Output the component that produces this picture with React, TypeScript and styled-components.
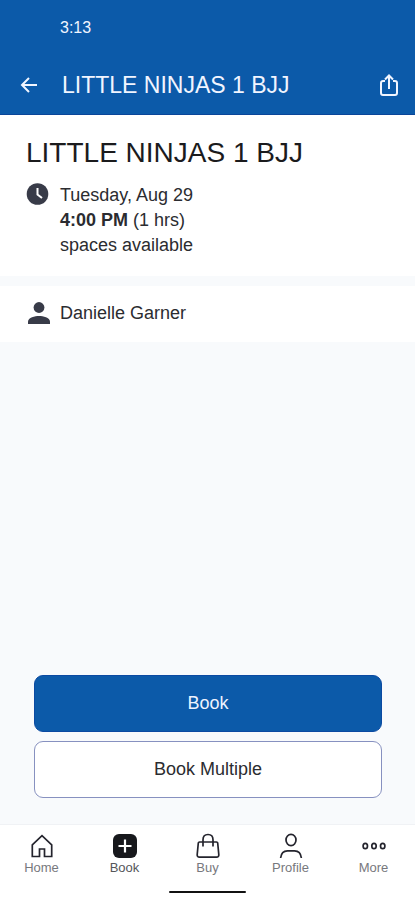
import React from "react";
import styled, { createGlobalStyle } from "styled-components";

const GlobalStyle = createGlobalStyle`
  * { box-sizing: border-box; }
  body {
    margin: 0;
    background: #f8fafc;
    font-family: "Liberation Sans", Arial, sans-serif;
    color: #2b2c30;
  }
  h1, h2, p { margin: 0; font-weight: 400; }
  svg { display: block; flex: none; }
`;

const Screen = styled.div`
  display: flex;
  flex-direction: column;
  min-height: 100vh;
`;

const Header = styled.header`
  background: #0c5aa9;
  border-bottom: 1px solid #0a4599;
  color: #f1f5ff;
`;

const StatusBar = styled.div`
  padding: 18px 60px 0;
  font-size: 16px;
  line-height: 20px;
`;

const AppBar = styled.div`
  display: flex;
  align-items: center;
  margin-top: 18px;
  height: 58px;
  padding: 0 12px 0 16px;
`;

const AppTitle = styled.h1`
  flex: 1;
  margin-left: 20px;
  font-size: 23px;
  line-height: 28px;
`;

const IconButton = styled.button`
  display: flex;
  padding: 0;
  border: 0;
  background: none;
  color: inherit;
`;

const Card = styled.section<{ $compact?: boolean }>`
  background: #fff;
  padding: ${(p) => (p.$compact ? "15px 26px 16px" : "20px 26px 18px")};
  & + & { margin-top: 10px; }
`;

const ClassTitle = styled.h2`
  color: #1b1b1d;
  font-size: 28px;
  line-height: 36px;
  margin-bottom: 12px;
`;

const InfoRow = styled.div`
  display: flex;
  align-items: flex-start;
  gap: 10px;
`;

const InfoIcon = styled.svg`
  width: 24px;
  height: 24px;
  fill: #383b48;
`;

const InfoText = styled.div`
  font-size: 18px;
  line-height: 25px;
`;

const Actions = styled.div`
  display: flex;
  flex-direction: column;
  gap: 9px;
  margin-top: auto;
  padding: 20px 33px 26px 34px;
`;

const ActionButton = styled.button<{ $primary?: boolean }>`
  height: 57px;
  border: 1px solid ${(p) => (p.$primary ? "#0b4aa2" : "#8791c0")};
  border-radius: 9px;
  background: ${(p) => (p.$primary ? "#0c5aa9" : "#fff")};
  color: ${(p) => (p.$primary ? "#edf3ff" : "#2b2c30")};
  font: inherit;
  font-size: 18px;
`;

const NavArea = styled.footer`
  background: #fff;
  border-top: 1px solid #f0f2f5;
  padding-bottom: 7px;
`;

const Nav = styled.nav`
  display: grid;
  grid-template-columns: repeat(5, 1fr);
`;

const NavLink = styled.a<{ $active?: boolean }>`
  display: flex;
  flex-direction: column;
  align-items: center;
  padding-top: 7px;
  color: ${(p) => (p.$active ? "#55565a" : "#77787d")};
  font-size: 13px;
  line-height: 16px;
  text-decoration: none;
`;

const NavIcon = styled.svg`
  width: 28px;
  height: 28px;
  fill: none;
  stroke: #24242d;
  stroke-width: 1.7;
`;

const HomeIndicator = styled.div`
  width: 77px;
  height: 2px;
  margin: 15px auto 0;
  border-radius: 1px;
  background: #111;
`;

const navItems = [
  {
    label: "Home",
    icon: <path d="M4.3 12.8 14 3.7l9.7 9.1v11.7h-7.2v-7.5h-5v7.5H4.3Z" />,
  },
  {
    label: "Book",
    active: true,
    icon: (
      <>
        <rect x="2" y="2" width="24" height="24" rx="6" fill="#17181c" stroke="none" />
        <path d="M14 7.5v13M7.5 14h13" stroke="#fff" strokeWidth="2.2" />
      </>
    ),
  },
  {
    label: "Buy",
    icon: (
      <path d="M5.5 10h17q1 0 1.2 1l1.100 11.500q.2 2.700-2.300 2.700h-17q-2.500 0-2.300-2.700l1.100-11.500q.2-1 1.200-1ZM9 14.500V7.700C9 4.500 11 2.500 14 2.500s5 2 5 5.200v6.800" />
    ),
  },
  {
    label: "Profile",
    icon: (
      <>
        <ellipse cx="14" cy="8" rx="5" ry="5.600" />
        <path d="M3.600 26c.5-4.600 3-7.200 6.900-7.200h7c3.900 0 6.400 2.600 6.900 7.200" />
      </>
    ),
  },
  {
    label: "More",
    icon: (
      <>
        <ellipse cx="5.3" cy="14" rx="2.2" ry="2.7" />
        <ellipse cx="14" cy="14" rx="2.2" ry="2.7" />
        <ellipse cx="22.7" cy="14" rx="2.2" ry="2.7" />
      </>
    ),
  },
];

export default function App() {
  return (
    <Screen>
      <GlobalStyle />
      <Header>
        <StatusBar>3:13</StatusBar>
        <AppBar>
          <IconButton aria-label="Back">
            <svg width="26" height="26" viewBox="0 0 26 26" fill="none" stroke="currentColor" strokeWidth="2">
              <path d="M21 13H6M13 6l-7 7 7 7" />
            </svg>
          </IconButton>
          <AppTitle>LITTLE NINJAS 1 BJJ</AppTitle>
          <IconButton aria-label="Share">
            <svg width="28" height="28" viewBox="0 0 28 28" fill="none" stroke="currentColor" strokeWidth="2">
              <path d="M10 10H8q-2 0-2 2v10q0 2 2 2h12q2 0 2-2V12q0-2-2-2h-2M14 18V4.5M10 8.5l4-4 4 4" />
            </svg>
          </IconButton>
        </AppBar>
      </Header>

      <main>
        <Card>
          <ClassTitle>LITTLE NINJAS 1 BJJ</ClassTitle>
          <InfoRow>
            <InfoIcon viewBox="0 0 24 24" aria-hidden="true">
              <circle cx="11.5" cy="11" r="10.8" />
              <path d="M11.5 5v6.5l4.5 3.5" fill="none" stroke="#fff" strokeWidth="2" />
            </InfoIcon>
            <InfoText>
              <p>Tuesday, Aug 29</p>
              <p><strong>4:00 PM</strong> (1 hrs)</p>
              <p>spaces available</p>
            </InfoText>
          </InfoRow>
        </Card>
        <Card $compact>
          <InfoRow>
            <InfoIcon viewBox="0 0 24 24" aria-hidden="true">
              <circle cx="13" cy="6.5" r="5.4" />
              <path d="M2 23v-2.500c0-3.800 7-5.500 11-5.500s11 1.700 11 5.500V23Z" />
            </InfoIcon>
            <InfoText>Danielle Garner</InfoText>
          </InfoRow>
        </Card>
      </main>

      <Actions>
        <ActionButton $primary>Book</ActionButton>
        <ActionButton>Book Multiple</ActionButton>
      </Actions>

      <NavArea>
        <Nav aria-label="Main">
          {navItems.map((item) => (
            <NavLink key={item.label} href="#" $active={item.active} aria-current={item.active ? "page" : undefined}>
              <NavIcon viewBox="0 0 28 28" aria-hidden="true">{item.icon}</NavIcon>
              {item.label}
            </NavLink>
          ))}
        </Nav>
        <HomeIndicator />
      </NavArea>
    </Screen>
  );
}
